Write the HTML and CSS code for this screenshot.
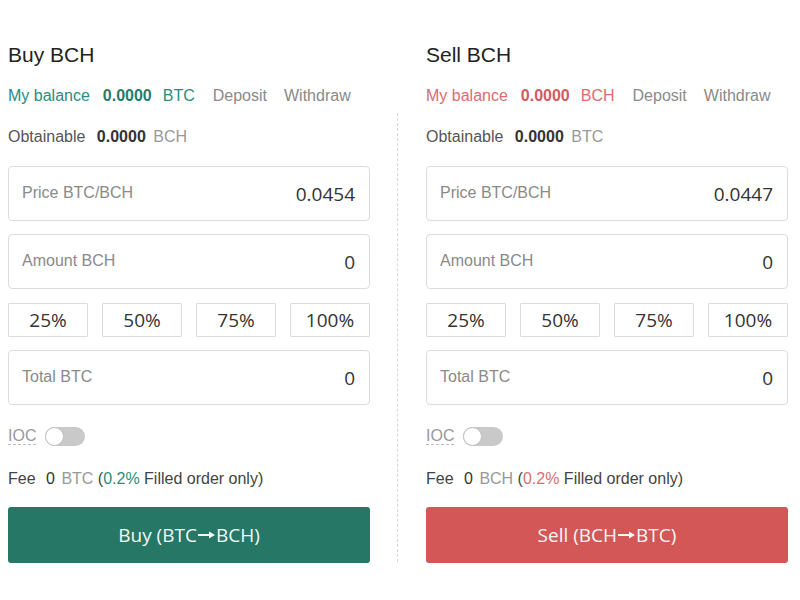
FILE: index.html
```html
<!DOCTYPE html>
<html lang="en">
<head>
    <meta charset="UTF-8">
    <meta name="viewport" content="width=device-width, initial-scale=1.0">
    <title>Trade BCH</title>
    <link rel="stylesheet" href="styles.css">
</head>
<body>
    <div class="trade">
        <div class="panel buy">
            <h2>Buy BCH</h2>
            <div class="balance">
                <span class="accent">My balance</span>
                <b class="accent">0.0000</b>
                <span class="accent">BTC</span>
                <a>Deposit</a>
                <a>Withdraw</a>
            </div>
            <div class="obtain">Obtainable <b>0.0000</b> <span class="unit">BCH</span></div>

            <div class="field"><span class="label">Price BTC/BCH</span><span class="value">0.0454</span></div>
            <div class="field"><span class="label">Amount BCH</span><span class="value">0</span></div>
            <div class="percents">
                <button>25%</button>
                <button>50%</button>
                <button>75%</button>
                <button>100%</button>
            </div>
            <div class="field"><span class="label">Total BTC</span><span class="value">0</span></div>

            <div class="ioc"><span class="ioc-label">IOC</span><span class="toggle"><span class="knob"></span></span></div>
            <div class="fee">Fee <span class="num">0</span> <span class="unit">BTC</span> (<span class="accent">0.2%</span> Filled order only)</div>
            <button class="submit">Buy (BTC<svg class="arrow" width="17" height="8" viewBox="0 0 17 8"><path d="M0 4h12" stroke="currentColor" stroke-width="2"/><path d="M11 0.5L17 4L11 7.5Z" fill="currentColor"/></svg>BCH)</button>
        </div>

        <div class="divider"></div>

        <div class="panel sell">
            <h2>Sell BCH</h2>
            <div class="balance">
                <span class="accent">My balance</span>
                <b class="accent">0.0000</b>
                <span class="accent">BCH</span>
                <a>Deposit</a>
                <a>Withdraw</a>
            </div>
            <div class="obtain">Obtainable <b>0.0000</b> <span class="unit">BTC</span></div>

            <div class="field"><span class="label">Price BTC/BCH</span><span class="value">0.0447</span></div>
            <div class="field"><span class="label">Amount BCH</span><span class="value">0</span></div>
            <div class="percents">
                <button>25%</button>
                <button>50%</button>
                <button>75%</button>
                <button>100%</button>
            </div>
            <div class="field"><span class="label">Total BTC</span><span class="value">0</span></div>

            <div class="ioc"><span class="ioc-label">IOC</span><span class="toggle"><span class="knob"></span></span></div>
            <div class="fee">Fee <span class="num">0</span> <span class="unit">BCH</span> (<span class="accent">0.2%</span> Filled order only)</div>
            <button class="submit">Sell (BCH<svg class="arrow" width="17" height="8" viewBox="0 0 17 8"><path d="M0 4h12" stroke="currentColor" stroke-width="2"/><path d="M11 0.5L17 4L11 7.5Z" fill="currentColor"/></svg>BTC)</button>
        </div>
    </div>
</body>
</html>
```

FILE: styles.css
```css
body{
    margin: 0;
    background: #fff;
    font-family: "Liberation Sans", Arial, sans-serif;
    color: #333;
}

.trade{
    display: flex;
    padding: 43px 0 0 8px;
}

.panel{
    width: 362px;
    display: flex;
    flex-direction: column;
}

.divider{
    width: 0;
    margin: 70px 28px -14px 27px;
    border-left: 1px dashed #d8d8d8;
}

.panel h2{
    margin: 0;
    font-size: 21px;
    line-height: 24px;
    font-weight: normal;
    color: #222;
}

.balance{
    margin-top: 19px;
    display: flex;
    align-items: center;
    font-size: 16px;
    line-height: 20px;
}

.balance b{
    margin: 0 11px 0 13px;
}

.balance a{
    color: #8a8a8a;
    margin-left: 18px;
}

.balance a + a{
    margin-left: 17px;
}

.buy .accent{ color: #2a8c80; }
.buy .balance b{ color: #1f7c70; }
.sell .accent{ color: #dc6c70; }
.sell .balance b{ color: #d45a5e; }

.obtain{
    margin-top: 21px;
    font-size: 16px;
    line-height: 20px;
    color: #555;
}

.obtain b{
    color: #333;
    margin: 0 3px 0 7px;
}

.unit{
    color: #999;
}

.field{
    margin-top: 19px;
    height: 55px;
    box-sizing: border-box;
    border: 1px solid #dcdcdc;
    border-radius: 4px;
    display: flex;
    align-items: center;
    justify-content: space-between;
    padding: 0 14px 0 13px;
}

.field + .field,
.percents + .field{
    margin-top: 13px;
}

.field .label{
    font-size: 16px;
    color: #8a8a8a;
    margin-top: -2px;
}

.field .value{
    font-family: "Open Sans", sans-serif;
    font-size: 19px;
    color: #333;
}

.percents{
    margin-top: 14px;
    display: flex;
    gap: 14px;
}

.percents button{
    flex: 1;
    height: 34px;
    background: #fff;
    border: 1px solid #dcdcdc;
    border-radius: 1px;
    font-family: "Open Sans", sans-serif;
    font-size: 19px;
    color: #333;
    padding: 0;
}

.ioc{
    margin-top: 21px;
    height: 20px;
    display: flex;
    align-items: center;
    gap: 9px;
    font-size: 16px;
}

.ioc-label{
    color: #999;
    border-bottom: 1px dashed #bbb;
    line-height: 16px;
}

.toggle{
    width: 40px;
    height: 19px;
    border-radius: 10px;
    background: #c9c9c9;
    position: relative;
}

.knob{
    position: absolute;
    left: 0;
    top: 0;
    width: 17px;
    height: 17px;
    border-radius: 50%;
    background: #fff;
    border: 1px solid #c0c0c0;
}

.fee{
    margin-top: 23px;
    font-size: 16px;
    line-height: 20px;
    color: #444;
}

.fee .num{
    margin: 0 2px 0 6px;
    color: #333;
}

.submit{
    margin-top: 18px;
    height: 56px;
    border: none;
    border-radius: 3px;
    font-family: "Open Sans", sans-serif;
    font-size: 19px;
    color: #f2f7f5;
    cursor: pointer;
}

.submit .arrow{
    margin: 0 1px 4px;
    vertical-align: middle;
}

.buy .submit{ background: #267766; }
.sell .submit{ background: #d45757; }
```
